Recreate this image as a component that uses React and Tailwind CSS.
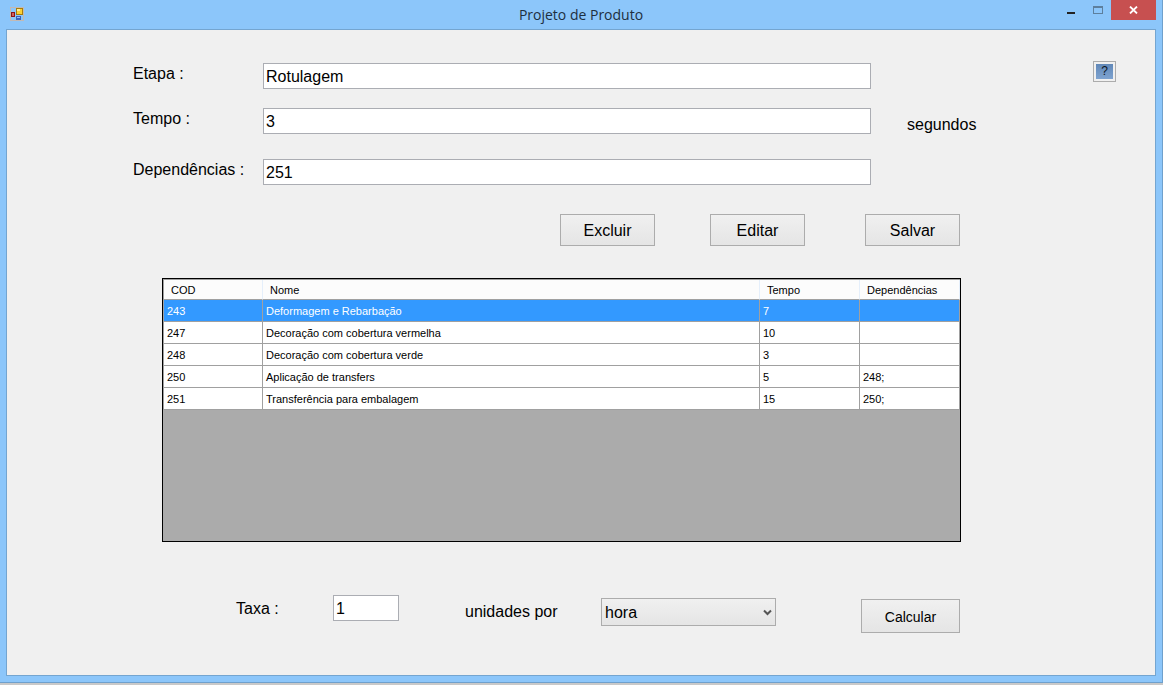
import { useState } from "react";

const etapas = [
  { cod: "243", nome: "Deformagem e Rebarbação", tempo: "7", dependencias: "" },
  { cod: "247", nome: "Decoração com cobertura vermelha", tempo: "10", dependencias: "" },
  { cod: "248", nome: "Decoração com cobertura verde", tempo: "3", dependencias: "" },
  { cod: "250", nome: "Aplicação de transfers", tempo: "5", dependencias: "248;" },
  { cod: "251", nome: "Transferência para embalagem", tempo: "15", dependencias: "250;" },
];

const inputStyle = "h-[26px] min-w-0 border border-[#abadb3] bg-white px-[2px] pt-[2px] text-base text-black outline-none";
const buttonStyle = "border border-[#acacac] bg-gradient-to-b from-[#f0f0f0] to-[#e5e5e5] pt-[2px] text-black";

function TitleBar() {
  return (
    <header className="grid h-[29px] grid-cols-[1fr_auto_1fr] items-start">
      <svg className="mt-[7px] ml-[10px]" width="14" height="14" viewBox="0 0 14 14" shapeRendering="crispEdges" aria-hidden="true">
        <rect x="0.5" y="0.5" width="13" height="13" fill="none" stroke="#c3b9b3" />
        <rect x="1" y="5" width="4" height="5" fill="#8e1414" />
        <rect x="2" y="6" width="2" height="3" fill="#d2605c" />
        <rect x="6" y="1" width="7" height="7" fill="#a67c0c" />
        <rect x="7" y="2" width="5" height="5" fill="#fbd034" />
        <rect x="7" y="2" width="3" height="2" fill="#fdeb9a" />
        <rect x="6" y="9" width="5" height="4" fill="#3c63b8" />
        <rect x="7" y="10" width="3" height="1" fill="#9dbcf2" />
      </svg>
      <h1 className="font-['Open_Sans',sans-serif] text-sm leading-[29px] text-[#1d2f40]">Projeto de Produto</h1>
      <div className="mr-[6px] flex justify-end">
        <button type="button" aria-label="Minimizar" className="flex h-5 w-[27px] items-center justify-center">
          <svg width="10" height="10" viewBox="0 0 10 10" shapeRendering="crispEdges">
            <rect x="1" y="7" width="8" height="2" fill="#222" />
          </svg>
        </button>
        <button type="button" aria-label="Maximizar" className="flex h-5 w-[27px] items-center justify-center">
          <svg width="10" height="8" viewBox="0 0 10 8" shapeRendering="crispEdges">
            <rect x="0" y="0" width="10" height="8" fill="#5d7f9d" />
            <rect x="1" y="2" width="8" height="5" fill="#8cc6fa" />
          </svg>
        </button>
        <button type="button" aria-label="Fechar" className="flex h-5 w-[45px] items-center justify-center bg-[#c75050]">
          <svg width="9" height="8" viewBox="0 0 9 8">
            <path d="M1 0.6L8 7.4M8 0.6L1 7.4" stroke="#fff" strokeWidth="1.9" />
          </svg>
        </button>
      </div>
    </header>
  );
}

function Field({ id, label, value, onChange, children }) {
  return (
    <div className="flex items-center">
      <label htmlFor={id} className="w-[130px] shrink-0 pb-1 leading-5">{label}</label>
      <input id={id} type="text" value={value} onChange={(e) => onChange(e.target.value)} className={`${inputStyle} flex-1`} />
      <div className="flex h-[26px] w-[284px] shrink-0 items-center">{children}</div>
    </div>
  );
}

function EtapasTable({ selected, onSelect }) {
  const cell = "h-[22px] border-r border-b border-[#a0a0a0] px-[3px] py-0";
  const head = "h-5 border-r border-b border-r-[#e5effb] border-b-[#a0a0a0] bg-[#fcfcfc] px-[7px] py-0 font-normal";

  return (
    <div className="min-h-[264px] border border-black bg-[#ababab]">
      <table className="w-full table-fixed border-separate border-spacing-0 border-t border-l border-[#a0a0a0] text-left text-[11px] leading-4">
        <thead>
          <tr>
            <th className={`${head} w-[99px]`}>COD</th>
            <th className={head}>Nome</th>
            <th className={`${head} w-[100px]`}>Tempo</th>
            <th className={`${head} w-[100px]`}>Dependências</th>
          </tr>
        </thead>
        <tbody>
          {etapas.map((etapa) => (
            <tr
              key={etapa.cod}
              onClick={() => onSelect(etapa.cod)}
              className={etapa.cod === selected ? "bg-[#3399ff] text-white" : "bg-white text-black"}
            >
              <td className={cell}>{etapa.cod}</td>
              <td className={cell}>{etapa.nome}</td>
              <td className={cell}>{etapa.tempo}</td>
              <td className={cell}>{etapa.dependencias}</td>
            </tr>
          ))}
        </tbody>
      </table>
    </div>
  );
}

export default function App() {
  const [nome, setNome] = useState("Rotulagem");
  const [tempo, setTempo] = useState("3");
  const [dependencias, setDependencias] = useState("251");
  const [taxa, setTaxa] = useState("1");
  const [unidade, setUnidade] = useState("hora");
  const [selected, setSelected] = useState("243");

  return (
    <div className="flex min-h-screen flex-col bg-[#c9c9c9] pb-[2px] font-['Liberation_Sans',Arial,sans-serif] text-base text-black">
      <div className="flex flex-1 flex-col border-r border-b border-[#6fa0cc] bg-[#8cc6fa]">
        <TitleBar />

        <main className="mx-[6px] mb-[6px] flex-1 border border-[#74a5d0] bg-[#f0f0f0] pt-[33px]">
          {/* Step form */}
          <div className="pl-[126px]">
            <Field id="etapa" label="Etapa :" value={nome} onChange={setNome}>
              <button type="button" aria-label="Ajuda" className="mr-[39px] mb-[10px] ml-auto border border-[#acacac] bg-[#f0f0f0] p-[2px]">
                <span className="block h-[15px] w-[17px] bg-gradient-to-b from-[#6188b8] to-[#7ea3d0] text-xs leading-[15px] text-[#0c141e]">?</span>
              </button>
            </Field>
            <div className="mt-[19px]">
              <Field id="tempo" label="Tempo :" value={tempo} onChange={setTempo}>
                <span className="ml-9 pt-2 leading-5">segundos</span>
              </Field>
            </div>
            <div className="mt-[25px]">
              <Field id="dependencias" label="Dependências :" value={dependencias} onChange={setDependencias} />
            </div>
          </div>

          {/* Actions */}
          <div className="mt-[29px] mr-[195px] flex justify-end">
            <button type="button" className={`${buttonStyle} h-8 w-[95px]`}>Excluir</button>
            <button type="button" className={`${buttonStyle} ml-[55px] h-8 w-[95px]`}>Editar</button>
            <button type="button" className={`${buttonStyle} ml-[60px] h-8 w-[95px]`}>Salvar</button>
          </div>

          <div className="mt-8 mr-[194px] ml-[155px]">
            <EtapasTable selected={selected} onSelect={setSelected} />
          </div>

          {/* Production rate */}
          <div className="mt-[53px] mr-[195px] mb-6 ml-[229px] flex items-start">
            <label htmlFor="taxa" className="mt-1 w-[97px] leading-5">Taxa :</label>
            <input id="taxa" type="text" value={taxa} onChange={(e) => setTaxa(e.target.value)} className={`${inputStyle} w-[66px]`} />
            <label htmlFor="unidade" className="mt-[7px] ml-[66px] w-[136px] leading-5">unidades por</label>
            <div className="relative mt-[3px]">
              <select
                id="unidade"
                value={unidade}
                onChange={(e) => setUnidade(e.target.value)}
                className={`${buttonStyle} h-7 w-[175px] appearance-none px-[3px]`}
              >
                <option value="minuto">minuto</option>
                <option value="hora">hora</option>
                <option value="dia">dia</option>
              </select>
              <svg className="pointer-events-none absolute top-[11px] right-1" width="9" height="8" viewBox="0 0 9 8" aria-hidden="true">
                <path d="M1 1.5L4.5 5L8 1.5" fill="none" stroke="#555" strokeWidth="2" />
              </svg>
            </div>
            <button type="button" className={`${buttonStyle} mt-1 ml-auto h-[34px] w-[99px] text-sm`}>Calcular</button>
          </div>
        </main>
      </div>
    </div>
  );
}
